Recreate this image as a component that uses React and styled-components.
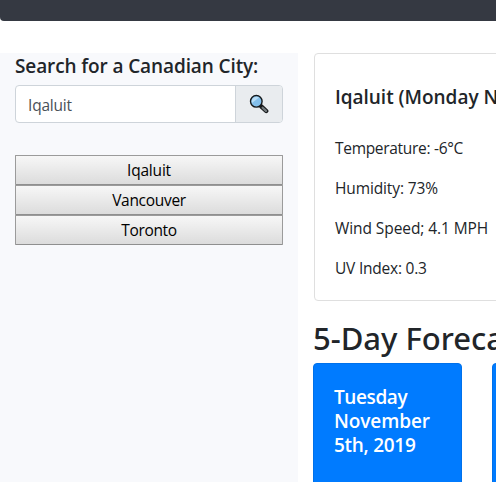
import React from "react";
import styled, { createGlobalStyle } from "styled-components";

const GlobalStyle = createGlobalStyle`
  *, *::before, *::after { box-sizing: border-box; }
  html, body { margin: 0; overflow: hidden; background: #fff; }
  body {
    font-family: "Open Sans", "Noto Sans", sans-serif;
    font-size: 15.5px;
    line-height: 24px;
    color: #212529;
  }
`;

const Page = styled.div`
  height: 482px;
  overflow: hidden;
`;

const Navbar = styled.header`
  height: 21px;
  margin-bottom: 32px;
  background: #353942;
  border-radius: 0 0 0 4px;
`;

const Columns = styled.div`
  display: flex;
  height: 429px;
`;

const Sidebar = styled.aside`
  flex: none;
  width: 298px;
  padding: 1px 15px 0;
  background: #f8f9fc;
`;

const Heading = styled.h5`
  margin: 0;
  font-size: 19px;
  line-height: 24px;
  font-weight: 600;
  white-space: nowrap;
`;

const Text = styled.span`
  display: inline-block;
  white-space: nowrap;
  letter-spacing: ${(p) => p.$track || 0}px;
`;

const SearchGroup = styled.div`
  display: flex;
  width: 268px;
  height: 38px;
  margin: 7px 0 32px;
  border: 1px solid #ced4da;
  border-radius: 4px;
  background: #fff;
  overflow: hidden;
`;

const SearchField = styled.div`
  flex: 1;
  padding: 7px 12px 5px;
  color: #495057;
`;

const SearchButton = styled.div`
  display: flex;
  align-items: center;
  justify-content: center;
  width: 47px;
  border-left: 1px solid #ced4da;
  background: #e9ecef;
`;

const CityButton = styled.button`
  display: block;
  width: 268px;
  height: 30px;
  margin: 0;
  padding: 0;
  border: 1px solid #9b9b9b;
  border-bottom-color: #8f8f8f;
  border-radius: 1px;
  background: linear-gradient(#f7f7f7, #dcdcdc);
  font: inherit;
  color: #000;
`;

const Main = styled.main`
  flex: none;
  width: 700px;
  padding-left: 15px;
`;

const CurrentCard = styled.section`
  height: 248px;
  margin-left: 1px;
  padding: 31px 20px 0;
  border: 1px solid #dfdfdf;
  border-radius: 4px;
`;

const Reading = styled.p`
  margin: 0 0 16px;

  ${Heading} + & { margin-top: 27px; }
`;

const ForecastTitle = styled.h2`
  margin: 18px 0 6px;
  font-family: "Noto Sans", sans-serif;
  font-size: 31px;
  line-height: 38px;
  font-weight: 500;
  white-space: nowrap;
`;

const ForecastRow = styled.div`
  display: flex;
  gap: 30px;
`;

const DayCard = styled.article`
  width: 149px;
  height: 250px;
  padding: 21px 20px;
  border: 1px solid #0071eb;
  border-radius: 4px;
  background: #007bff;
  color: #fff;
`;

const MagnifierIcon = () => (
  <svg width="20" height="20" viewBox="0 0 20 20">
    <path d="M12.2 12.3 17.2 17" stroke="#16191b" strokeWidth="4.4" strokeLinecap="round" />
    <path d="M13.6 13.7 17 16.9" stroke="#747b7e" strokeWidth="2.2" strokeLinecap="round" />
    <circle cx="7.3" cy="7.3" r="5.8" fill="#83bfeb" stroke="#16191b" strokeWidth="1.4" />
    <path d="M3 8.9A4.7 4.7 0 0 1 10 3.5Z" fill="#b9def7" />
  </svg>
);

const cities = [
  { name: "Iqaluit", track: -0.2 },
  { name: "Vancouver", track: -0.3 },
  { name: "Toronto", track: -0.35 },
];

const readings = [
  { text: "Temperature: -6°C", track: -0.3 },
  { text: "Humidity: 73%", track: -0.12 },
  { text: "Wind Speed; 4.1 MPH", track: -0.08 },
  { text: "UV Index: 0.3", track: -0.22 },
];

const dateLines = [
  { text: "Tuesday", track: -0.4 },
  { text: "November", track: -0.1 },
  { text: "5th, 2019", track: -0.28 },
];

export default function App() {
  return (
    <Page>
      <GlobalStyle />
      <Navbar />
      <Columns>
        <Sidebar>
          <Heading><Text $track={-0.11}>Search for a Canadian City:</Text></Heading>
          <SearchGroup>
            <SearchField><Text $track={-0.2}>Iqaluit</Text></SearchField>
            <SearchButton><MagnifierIcon /></SearchButton>
          </SearchGroup>
          {cities.map((c) => (
            <CityButton key={c.name}><Text $track={c.track}>{c.name}</Text></CityButton>
          ))}
        </Sidebar>
        <Main>
          <CurrentCard>
            <Heading><Text $track={-0.03}>Iqaluit (Monday November 4th, 2019)</Text></Heading>
            {readings.map((r) => (
              <Reading key={r.text}><Text $track={r.track}>{r.text}</Text></Reading>
            ))}
          </CurrentCard>
          <ForecastTitle><Text>5-Day Forecast:</Text></ForecastTitle>
          <ForecastRow>
            <DayCard>
              {dateLines.map((l) => (
                <Heading key={l.text}><Text $track={l.track}>{l.text}</Text></Heading>
              ))}
            </DayCard>
            <DayCard />
          </ForecastRow>
        </Main>
      </Columns>
    </Page>
  );
}
